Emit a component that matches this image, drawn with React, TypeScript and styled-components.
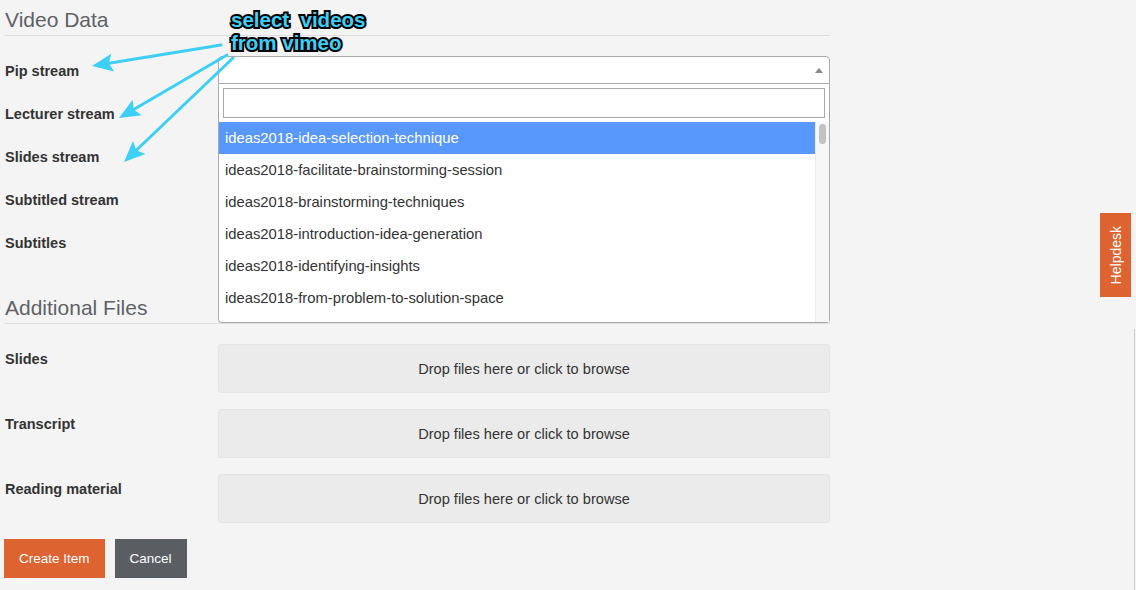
import React from "react";
import styled, { createGlobalStyle } from "styled-components";

const GlobalStyle = createGlobalStyle`
  html, body {
    margin: 0;
    padding: 0;
    background: #f4f4f4;
    font-family: "Liberation Sans", Arial, sans-serif;
    color: #333;
    overflow: hidden;
  }
`;

const Page = styled.div`
  position: relative;
  width: 826px;
  padding-left: 4px;
  min-height: 590px;
`;

const SectionTitle = styled.h2`
  margin: 0 0 20px 0;
  padding: 8px 0 3px 1px;
  font-size: 21px;
  line-height: 24px;
  font-weight: 400;
  color: #5e6266;
  border-bottom: 1px solid #dcdcdc;
`;

const FieldRow = styled.div<{ $gap: number }>`
  display: flex;
  align-items: flex-start;
  margin-bottom: ${(p) => p.$gap}px;
`;

const Label = styled.label<{ $tall?: boolean }>`
  flex: none;
  width: 213px;
  padding-left: 1px;
  font-size: 14.5px;
  font-weight: 700;
  color: #333;
  line-height: ${(p) => (p.$tall ? "20px" : "26px")};
  padding-top: ${(p) => (p.$tall ? "5px" : "2px")};
`;

const Field = styled.div`
  position: relative;
  flex: 1;
`;

const SelectBox = styled.div<{ $open?: boolean }>`
  box-sizing: border-box;
  height: 28px;
  background: #fff;
  border: 1px solid ${(p) => (p.$open ? "#aaa" : "#ccc")};
  border-radius: ${(p) => (p.$open ? "4px 4px 0 0" : "4px")};
  position: relative;
`;

const Caret = styled.span`
  position: absolute;
  right: 6px;
  top: 11px;
  width: 0;
  height: 0;
  border-left: 4px solid transparent;
  border-right: 4px solid transparent;
  border-bottom: 5px solid #888;
`;

const Dropdown = styled.div`
  position: absolute;
  z-index: 5;
  left: 0;
  right: 0;
  top: 28px;
  box-sizing: border-box;
  background: #fff;
  border: 1px solid #aaa;
  border-top: none;
  border-radius: 0 0 4px 4px;
`;

const SearchWrap = styled.div`
  padding: 4px;
`;

const SearchInput = styled.div`
  box-sizing: border-box;
  height: 30px;
  border: 1px solid #aaa;
  background: #fff;
`;

const ResultsArea = styled.div`
  display: flex;
  height: 200px;
`;

const Results = styled.ul`
  flex: 1;
  list-style: none;
  margin: 0;
  padding: 0;
  overflow: hidden;
`;

const ScrollTrack = styled.div`
  flex: none;
  width: 14px;
  background: #f7f7f7;
  border-left: 1px solid #ececec;
  padding: 2px 3px 0 3px;
  box-sizing: border-box;
`;

const ScrollThumb = styled.div`
  width: 7px;
  height: 20px;
  border-radius: 4px;
  background: #c2c2c2;
`;

const Option = styled.li<{ $active?: boolean }>`
  height: 32px;
  line-height: 32px;
  padding: 0 6px;
  font-size: 14.8px;
  white-space: nowrap;
  color: ${(p) => (p.$active ? "#fff" : "#333")};
  background: ${(p) => (p.$active ? "#5897fb" : "#fff")};
`;

const Dropzone = styled.div`
  box-sizing: border-box;
  height: 49px;
  background: #ebebeb;
  border: 1px solid #e4e4e4;
  border-radius: 3px;
  display: flex;
  align-items: center;
  justify-content: center;
  font-size: 14.6px;
  color: #333;
`;

const Actions = styled.div`
  display: flex;
  gap: 10px;
`;

const Button = styled.button<{ $variant: "primary" | "secondary" }>`
  height: 39px;
  padding: 0 15px;
  border: none;
  border-radius: 0;
  font-family: "Liberation Sans", Arial, sans-serif;
  font-size: 13.5px;
  color: #fff;
  background: ${(p) => (p.$variant === "primary" ? "#dd6330" : "#5a5e63")};
  cursor: pointer;
`;

const HelpTab = styled.div`
  position: fixed;
  right: 5px;
  top: 213px;
  width: 31px;
  height: 84px;
  background: #dd6330;
  color: #fff;
  font-size: 14px;
  display: flex;
  align-items: center;
  justify-content: center;
`;

const HelpText = styled.span`
  writing-mode: vertical-rl;
  transform: rotate(180deg);
  line-height: 1;
`;

const EdgeLine = styled.div`
  position: fixed;
  right: 1px;
  top: 329px;
  bottom: 0;
  width: 1px;
  background: #cdcbd8;
`;

const Annotation = styled.div`
  position: absolute;
  left: 0;
  top: 0;
  width: 400px;
  height: 180px;
  pointer-events: none;
  z-index: 10;
`;

const AnnotationSvg = styled.svg`
  position: absolute;
  left: 0;
  top: 0;
`;

const AnnotationText = styled.div`
  position: absolute;
  left: 231px;
  top: 8px;
  font-size: 20.5px;
  font-weight: 700;
  line-height: 23px;
  color: #3dcff6;
  white-space: pre;
  -webkit-text-stroke: 4px #000;
  paint-order: stroke fill;
`;

const options = [
  "ideas2018-idea-selection-technique",
  "ideas2018-facilitate-brainstorming-session",
  "ideas2018-brainstorming-techniques",
  "ideas2018-introduction-idea-generation",
  "ideas2018-identifying-insights",
  "ideas2018-from-problem-to-solution-space",
];

type Arrow = { x1: number; y1: number; x2: number; y2: number };
const arrows: Arrow[] = [
  { x1: 221, y1: 45, x2: 92, y2: 66 },
  { x1: 227, y1: 55, x2: 119, y2: 118 },
  { x1: 233, y1: 58, x2: 124, y2: 162 },
];

function ArrowShape({ a }: { a: Arrow }) {
  const dx = a.x2 - a.x1;
  const dy = a.y2 - a.y1;
  const len = Math.hypot(dx, dy);
  const ux = dx / len;
  const uy = dy / len;
  const headLen = 21;
  const half = 9;
  const bx = a.x2 - ux * headLen;
  const by = a.y2 - uy * headLen;
  const nx = -uy;
  const ny = ux;
  const notchX = a.x2 - ux * (headLen - 4);
  const notchY = a.y2 - uy * (headLen - 4);
  const pts = [
    `${a.x2},${a.y2}`,
    `${bx + nx * half},${by + ny * half}`,
    `${notchX},${notchY}`,
    `${bx - nx * half},${by - ny * half}`,
  ].join(" ");
  return (
    <g>
      <line x1={a.x1} y1={a.y1} x2={notchX} y2={notchY} stroke="#3dcff6" strokeWidth={3} strokeLinecap="round" />
      <polygon points={pts} fill="#3dcff6" />
    </g>
  );
}

export default function App() {
  return (
    <>
      <GlobalStyle />
      <Page>
        <SectionTitle>Video Data</SectionTitle>

        <FieldRow $gap={15}>
          <Label>Pip stream</Label>
          <Field>
            <SelectBox $open>
              <Caret />
            </SelectBox>
            <Dropdown>
              <SearchWrap>
                <SearchInput />
              </SearchWrap>
              <ResultsArea>
                <Results>
                  {options.map((o, i) => (
                    <Option key={o} $active={i === 0}>
                      {o}
                    </Option>
                  ))}
                </Results>
                <ScrollTrack>
                  <ScrollThumb />
                </ScrollTrack>
              </ResultsArea>
            </Dropdown>
          </Field>
        </FieldRow>

        <FieldRow $gap={15}>
          <Label>Lecturer stream</Label>
          <Field>
            <SelectBox />
          </Field>
        </FieldRow>

        <FieldRow $gap={15}>
          <Label>Slides stream</Label>
          <Field>
            <SelectBox />
          </Field>
        </FieldRow>

        <FieldRow $gap={15}>
          <Label>Subtitled stream</Label>
          <Field>
            <SelectBox />
          </Field>
        </FieldRow>

        <FieldRow $gap={11}>
          <Label>Subtitles</Label>
          <Field>
            <Dropzone>Drop files here or click to browse</Dropzone>
          </Field>
        </FieldRow>

        <SectionTitle>Additional Files</SectionTitle>

        <FieldRow $gap={16}>
          <Label $tall>Slides</Label>
          <Field>
            <Dropzone>Drop files here or click to browse</Dropzone>
          </Field>
        </FieldRow>

        <FieldRow $gap={16}>
          <Label $tall>Transcript</Label>
          <Field>
            <Dropzone>Drop files here or click to browse</Dropzone>
          </Field>
        </FieldRow>

        <FieldRow $gap={16}>
          <Label $tall>Reading material</Label>
          <Field>
            <Dropzone>Drop files here or click to browse</Dropzone>
          </Field>
        </FieldRow>

        <Actions>
          <Button $variant="primary">Create Item</Button>
          <Button $variant="secondary">Cancel</Button>
        </Actions>

        <Annotation>
          <AnnotationSvg width={400} height={180} viewBox="0 0 400 180">
            {arrows.map((a, i) => (
              <ArrowShape key={i} a={a} />
            ))}
          </AnnotationSvg>
          <AnnotationText>{"select  videos\nfrom vimeo"}</AnnotationText>
        </Annotation>
      </Page>

      <HelpTab>
        <HelpText>Helpdesk</HelpText>
      </HelpTab>
      <EdgeLine />
    </>
  );
}
